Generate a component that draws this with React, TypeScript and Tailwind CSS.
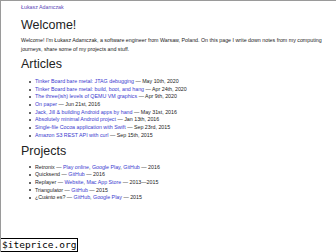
import React from "react";

const L = ({ children }: { children: React.ReactNode }) => (
  <span className="text-[#3a3acf]">{children}</span>
);

const articles: [string, string][] = [
  ["Tinker Board bare metal: JTAG debugging", "May 10th, 2020"],
  ["Tinker Board bare metal: build, boot, and hang", "Apr 24th, 2020"],
  ["The three(ish) levels of QEMU VM graphics", "Apr 9th, 2020"],
  ["On paper", "Jun 21st, 2016"],
  ["Jack, Jill & building Android apps by hand", "May 31st, 2016"],
  ["Absolutely minimal Android project", "Jan 13th, 2016"],
  ["Single-file Cocoa application with Swift", "Sep 23rd, 2015"],
  ["Amazon S3 REST API with curl", "Sep 15th, 2015"],
];

const projects: [string, string[], string][] = [
  ["Retronix", ["Play online", "Google Play", "GitHub"], "2016"],
  ["Quicksend", ["GitHub"], "2016"],
  ["Replayer", ["Website", "Mac App Store"], "2013—2015"],
  ["Triangulator", ["GitHub"], "2015"],
  ["¿Cuánto es?", ["GitHub", "Google Play"], "2015"],
];

function Bullet() {
  return <span className="w-[2px] h-[2px] bg-[#333] rounded-full shrink-0 mr-[4.5px] ml-[0.5px]" />;
}

export default function App() {
  return (
    <div
      className="relative w-[336px] h-[252px] overflow-hidden bg-white border-t border-l border-[#9a9a9a] text-[#222]"
      style={{ fontFamily: '"Liberation Sans", Arial, sans-serif' }}
    >
      <div className="pl-[20px] pt-[2px] w-[320px]">
        <div className="h-[9px] text-[5.3px] leading-[9px] text-[#5b48b8]">Łukasz Adamczak</div>
        <div className="h-[14px] text-[12.5px] leading-[14px] mt-[6px]">Welcome!</div>
        <div className="text-[5.3px] leading-[9px] mt-[4px] w-[296px]">
          <div className="h-[9px] whitespace-nowrap">
            Welcome! I'm Łukasz Adamczak, a software engineer from Warsaw, Poland. On this page I write down notes from my computing
          </div>
          <div className="h-[9px] whitespace-nowrap">journeys, share some of my projects and stuff.</div>
        </div>
        <div className="h-[14px] text-[12.5px] leading-[14px] mt-[3px]">Articles</div>
        <div className="mt-[7px] pl-[7px] text-[5.3px] flex flex-col">
          {articles.map(([t, d]) => (
            <div key={t} className="h-[7.7px] flex items-center">
              <Bullet />
              <span className="leading-[7.7px] whitespace-nowrap">
                <L>{t}</L> — {d}
              </span>
            </div>
          ))}
        </div>
        <div className="h-[14px] text-[12.5px] leading-[14px] mt-[4px]">Projects</div>
        <div className="mt-[6px] pl-[7px] text-[5.3px] flex flex-col">
          {projects.map(([n, links, y]) => (
            <div key={n} className="h-[7.7px] flex items-center">
              <Bullet />
              <span className="leading-[7.7px] whitespace-nowrap">
                {n} —{" "}
                {links.map((l, i) => (
                  <React.Fragment key={l}>
                    <L>{l}</L>
                    {i < links.length - 1 ? ", " : ""}
                  </React.Fragment>
                ))}{" "}
                — {y}
              </span>
            </div>
          ))}
        </div>
      </div>
      <div
        className="absolute left-[-1px] bottom-0 border border-black bg-white text-black text-[9.5px] leading-[12px] px-[1px]"
        style={{ fontFamily: '"DejaVu Sans Mono", monospace' }}
      >
        $iteprice.org
      </div>
    </div>
  );
}
